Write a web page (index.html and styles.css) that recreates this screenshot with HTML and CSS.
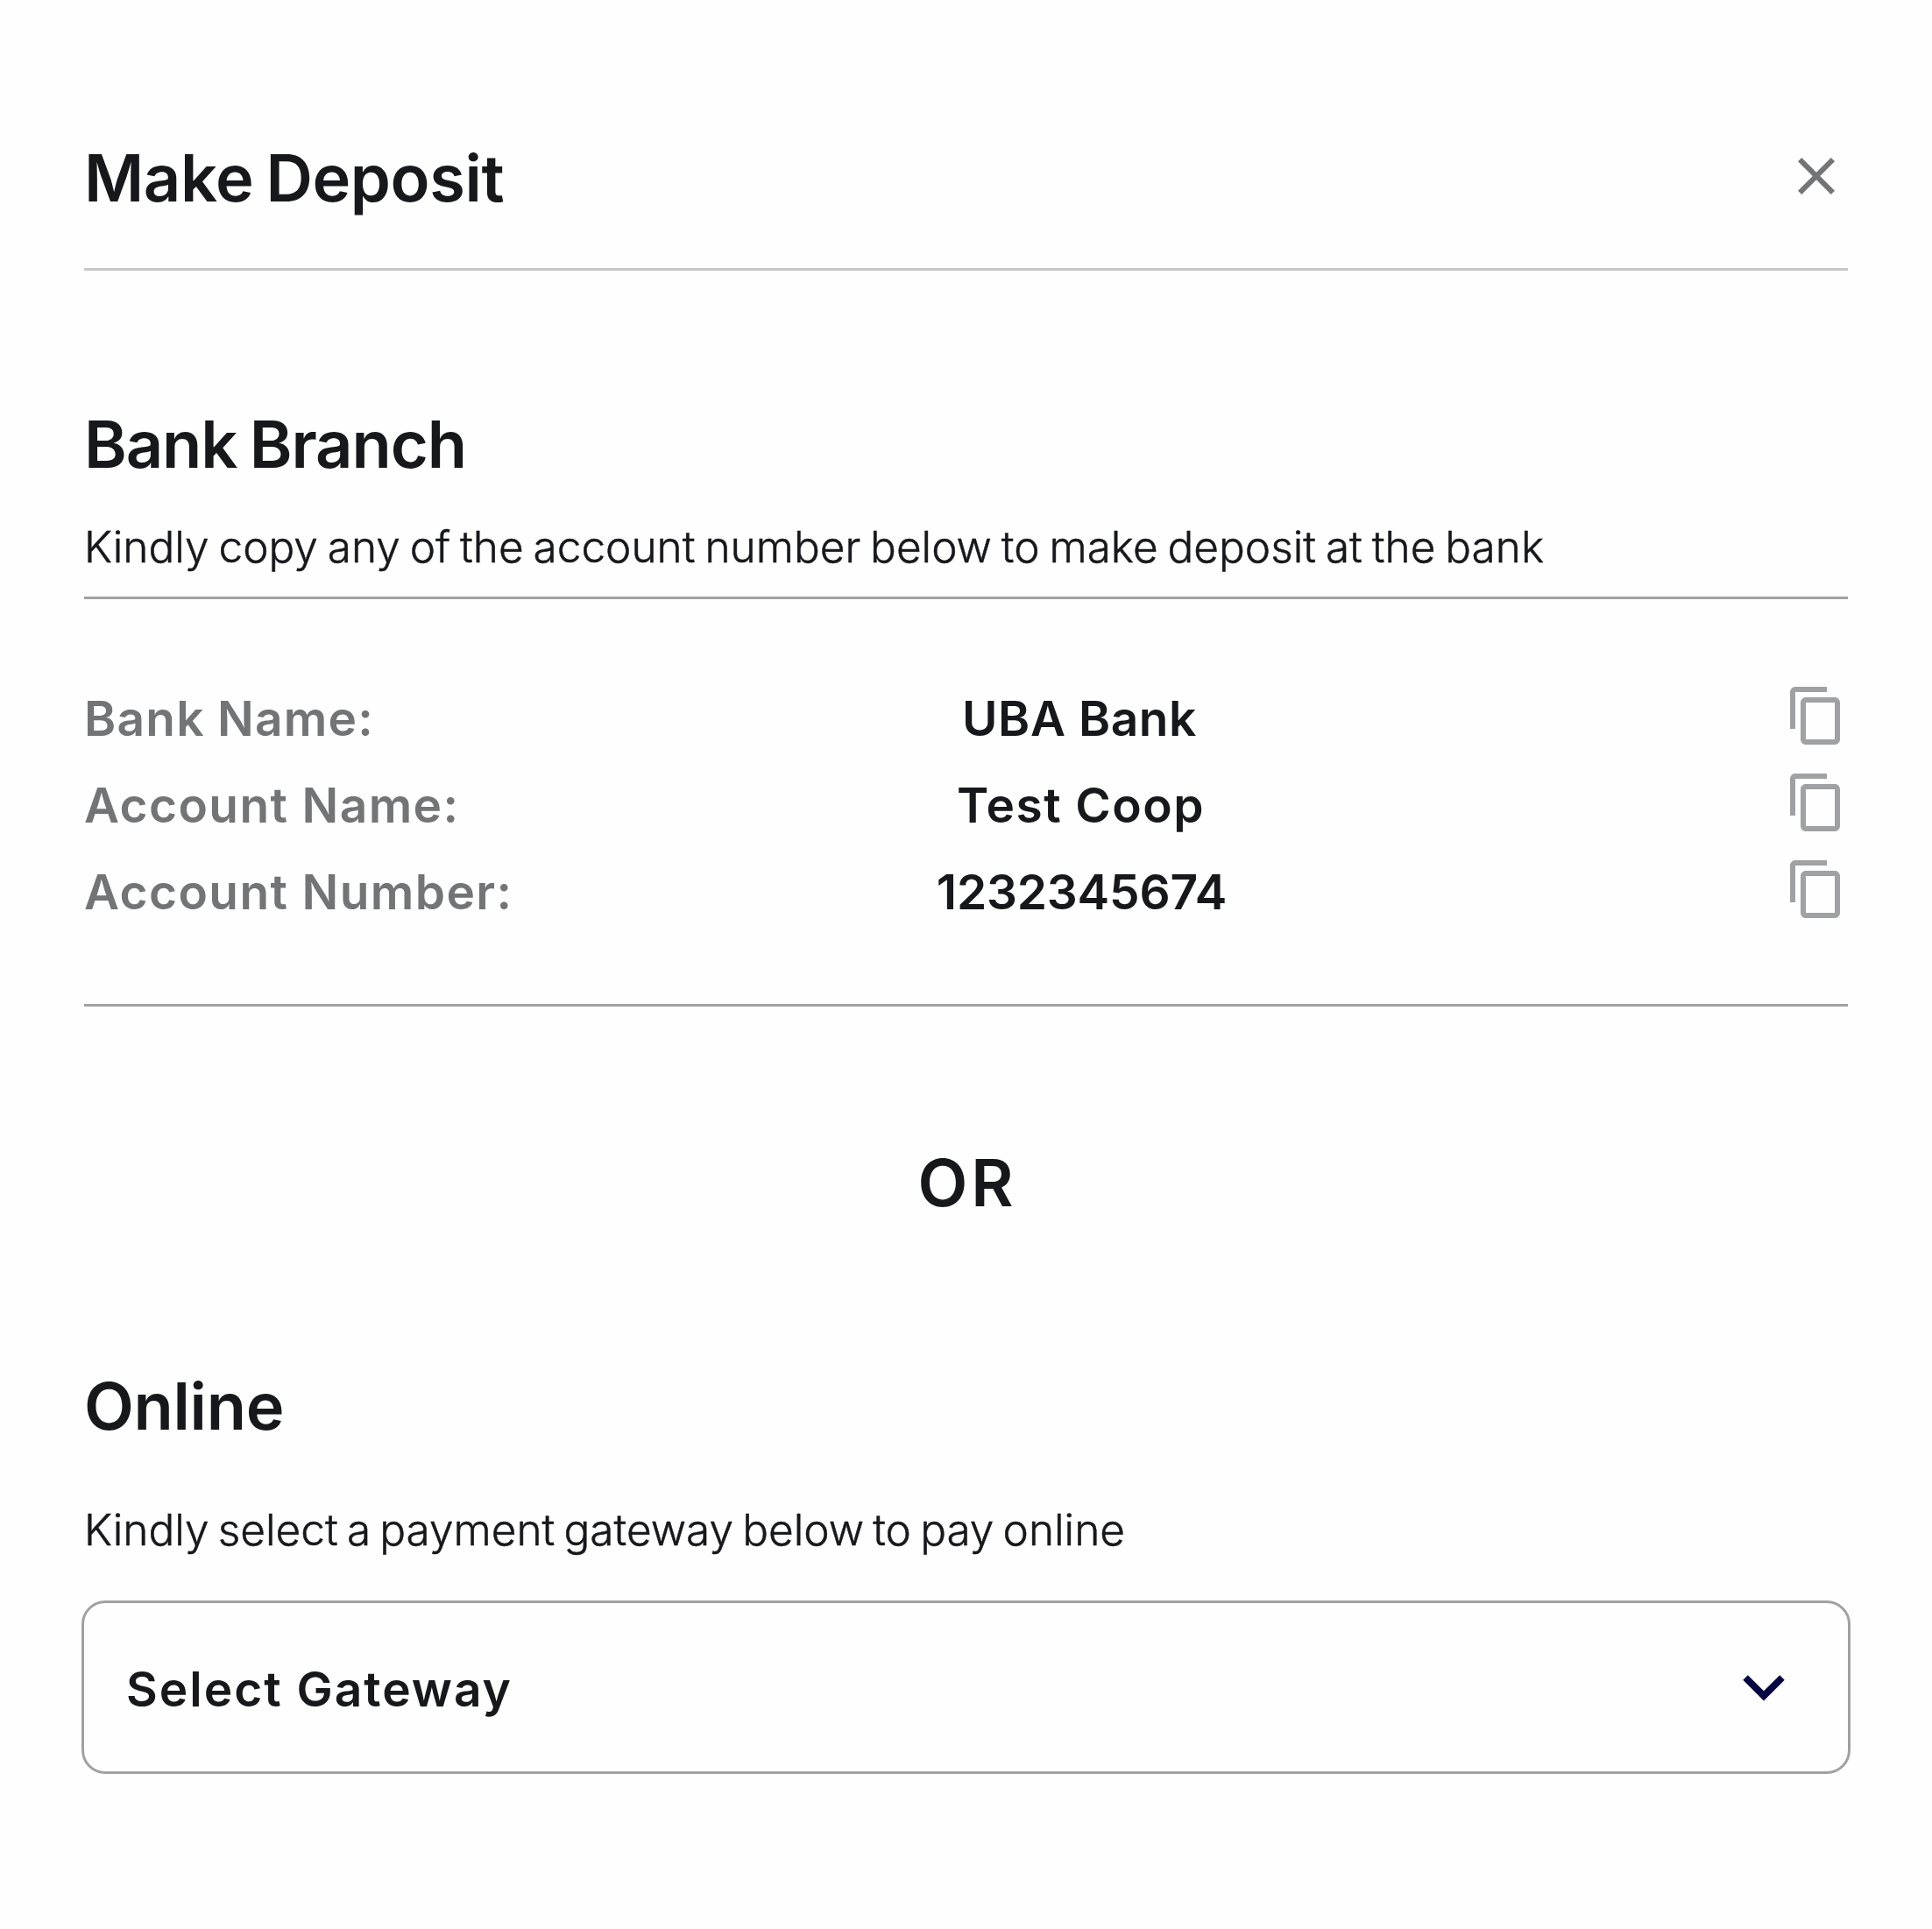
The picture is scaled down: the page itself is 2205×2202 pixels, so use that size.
FILE: index.html
```html
<!DOCTYPE html>
<html lang="en">
<head>
<meta charset="utf-8">
<title>Make Deposit</title>
<link rel="stylesheet" href="styles.css">
</head>
<body>
<svg class="sprite" aria-hidden="true">
  <symbol id="icon-copy" viewBox="0 0 24 24">
    <path d="M16 1H4C2.9 1 2 1.9 2 3v14h2V3h12V1zm3 4H8c-1.1 0-2 .9-2 2v14c0 1.1.9 2 2 2h11c1.1 0 2-.9 2-2V7c0-1.1-.9-2-2-2zm0 16H8V7h11v14z"/>
  </symbol>
</svg>
<main class="modal">
  <header class="modal-header">
    <h1 class="heading heading-title">Make Deposit</h1>
    <button class="close" aria-label="Close">
      <svg viewBox="0 0 24 24"><path d="M19 6.41 17.59 5 12 10.59 6.41 5 5 6.41 10.59 12 5 17.59 6.41 19 12 13.41 17.59 19 19 17.59 13.41 12z"/></svg>
    </button>
  </header>

  <section class="branch">
    <div class="branch-intro">
      <h2 class="heading heading-branch">Bank Branch</h2>
      <p class="hint">Kindly copy any of the account number below to make deposit at the bank</p>
    </div>
    <dl class="details">
      <div class="row">
        <dt class="label-bank">Bank Name:</dt>
        <dd class="value-bank">UBA Bank</dd>
        <button class="copy" aria-label="Copy bank name"><svg><use href="#icon-copy"/></svg></button>
      </div>
      <div class="row">
        <dt>Account Name:</dt>
        <dd class="value-name">Test Coop</dd>
        <button class="copy" aria-label="Copy account name"><svg><use href="#icon-copy"/></svg></button>
      </div>
      <div class="row">
        <dt>Account Number:</dt>
        <dd class="value-number">1232345674</dd>
        <button class="copy" aria-label="Copy account number"><svg><use href="#icon-copy"/></svg></button>
      </div>
    </dl>
  </section>

  <p class="heading divider">OR</p>

  <section class="online">
    <h2 class="heading heading-online">Online</h2>
    <p class="hint">Kindly select a payment gateway below to pay online</p>
    <button class="select">
      <span>Select Gateway</span>
      <svg class="chevron" viewBox="0 0 48 33"><path d="M5.8 1.2 24 19.3 42.2 1.2 47.7 6.7 24 30.6.3 6.7z"/></svg>
    </button>
  </section>
</main>
</body>
</html>
```
FILE: styles.css
```css
* {
  box-sizing: border-box;
  margin: 0;
  padding: 0;
}

body {
  background: #fefefe;
  color: #17181b;
  font-family: Inter, "Liberation Sans", sans-serif;
}

button {
  border: 0;
  background: none;
  color: inherit;
  font: inherit;
}

svg {
  display: block;
}

.sprite {
  display: none;
}

.modal {
  min-height: 2202px;
  padding: 157px 96px 0;
}

.modal-header {
  display: flex;
  justify-content: space-between;
  align-items: flex-start;
  padding-bottom: 57px;
  border-bottom: 3px solid #c5c6c8;
}

.heading {
  font-size: 74px;
  font-weight: 600;
  line-height: 92px;
}

.heading-title {
  letter-spacing: -0.4px;
  word-spacing: -4.2px;
}

.heading-branch {
  letter-spacing: -1.1px;
  word-spacing: -3px;
}

.heading-online {
  letter-spacing: -0.3px;
}

.close {
  margin-top: 8px;
}

.close svg,
.copy svg {
  width: 72px;
  height: 72px;
}

.close svg {
  fill: #737476;
}

.branch-intro {
  padding: 152px 0 26px;
  border-bottom: 3px solid #a0a1a2;
}

.hint {
  font-size: 49.5px;
  font-weight: 300;
  line-height: 62px;
  letter-spacing: 0;
  -webkit-text-stroke: 0.5px currentColor;
  white-space: nowrap;
}

.branch .hint {
  margin-top: 40px;
  word-spacing: -3px;
}

.details {
  padding: 87px 0 78px;
  border-bottom: 3px solid #a0a1a2;
  font-size: 55px;
  font-weight: 600;
  line-height: 99px;
}

.row {
  display: grid;
  grid-template-columns: 544px 1187px 1fr;
  height: 99px;
}

dt {
  color: #737476;
  letter-spacing: 1.4px;
}

.label-bank {
  letter-spacing: 1.25px;
  word-spacing: -1px;
}

dd {
  text-align: center;
}

.value-bank {
  padding-right: 3px;
  letter-spacing: 0.55px;
}

.value-name {
  letter-spacing: 1.45px;
}

.value-number {
  padding-left: 2px;
  letter-spacing: -0.2px;
}

.copy {
  align-self: start;
  justify-self: end;
  margin-top: 10px;
}

.copy svg {
  fill: #a0a1a2;
}

.divider {
  margin: 155px 0 163px;
  padding-left: 3px;
  letter-spacing: 4px;
  text-align: center;
}

.online .hint {
  margin-top: 64px;
  word-spacing: -3.7px;
}

.select {
  display: flex;
  justify-content: space-between;
  align-items: center;
  width: 2019px;
  height: 198px;
  margin: 50px -3px 0;
  padding: 3px 72px 0 48px;
  border: 3px solid #a0a1a2;
  border-radius: 27px;
  font-size: 55px;
  font-weight: 600;
  letter-spacing: 2px;
}

.chevron {
  width: 48px;
  height: 33px;
  fill: #040444;
}
```
